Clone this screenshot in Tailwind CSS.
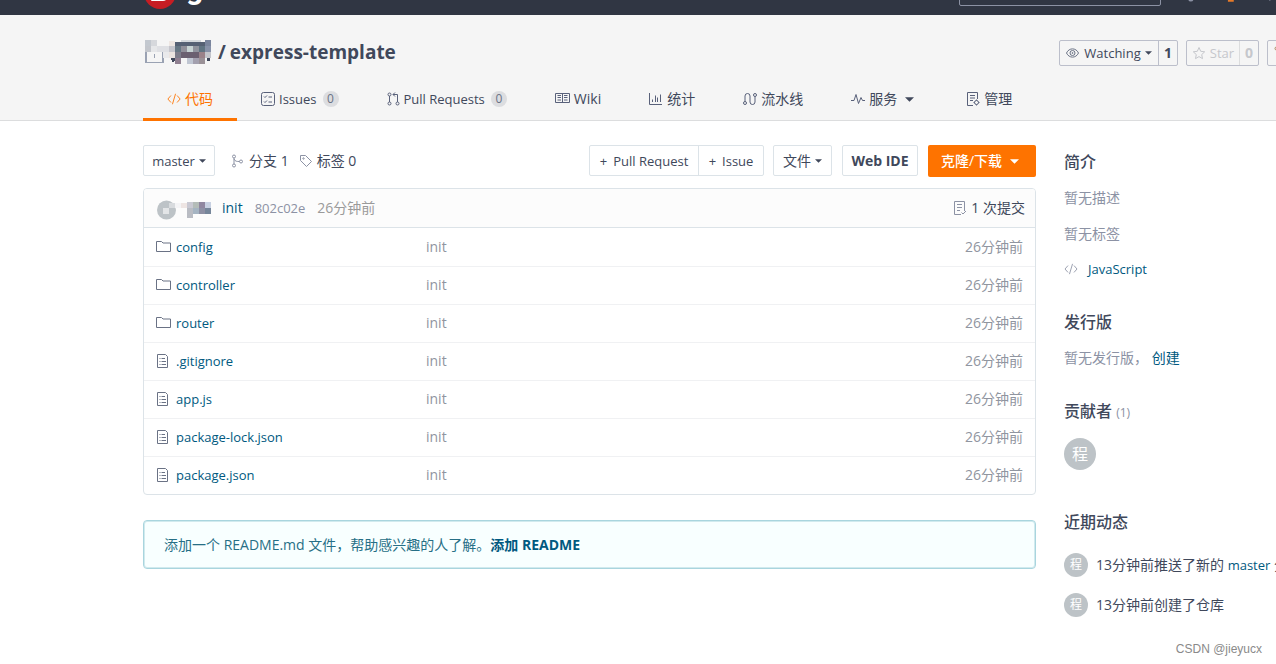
<!DOCTYPE html>
<html lang="zh-CN">
<head>
<meta charset="utf-8">
<title>express-template</title>
<script src="https://cdn.jsdelivr.net/npm/@tailwindcss/browser@4"></script>
</head>
<body class="min-h-screen overflow-x-hidden bg-white font-['Open_Sans','Noto_Sans_CJK_SC',sans-serif] text-sm leading-5 text-[#40485b]">
<svg class="hidden">
  <defs>
    <symbol id="folder" viewBox="0 0 16 14"><path d="M.5 11.500V1.500h5l1.500 1.500h7.500v8.500z" fill="none" stroke="#6a7285"/></symbol>
    <symbol id="file" viewBox="0 0 14 15"><path d="M1.500.500h8l2 2v11h-10zM3.500 4.500h1M3.500 7.500h1M3.500 10.500h1M5.500 4.500H9M5.500 7.500H10M5.500 10.500H10" fill="none" stroke="#6a7285"/></symbol>
    <symbol id="caret" viewBox="0 0 8 4"><path d="M0 0h8L4 4z" fill="currentColor"/></symbol>
    <symbol id="code" viewBox="0 0 16 14"><path d="M4.500 3 1 7l3.500 4M11.500 3 15 7l-3.500 4M9.800 1 6.200 13" fill="none" stroke="currentColor"/></symbol>
  </defs>
</svg>

<!-- Top bar, scrolled so that only its lower edge is in view -->
<header class="flex h-[15px] flex-col justify-end overflow-hidden bg-[#303643]">
  <div class="flex h-11 shrink-0 items-center pl-36">
    <a href="#" class="flex items-center gap-2.5 text-white">
      <svg class="size-8" viewBox="0 0 32 32"><circle cx="16" cy="16" r="16" fill="#c71d23"/><path d="M24 7H13a6 6 0 0 0-6 6v10a1 1 0 0 0 1 1h11a5 5 0 0 0 5-5v-5h-9v3h5v2a2 2 0 0 1-2 2h-7v-8a2 2 0 0 1 2-2h9z" fill="#fff"/></svg>
      <span class="pb-2 font-[Roboto] text-3xl font-bold leading-8">gitee</span>
    </a>
    <input type="search" aria-label="搜索" class="ml-auto h-[26px] w-[202px] rounded-xs border border-[#8c92a4] bg-transparent px-2 text-white">
    <div class="flex w-[115px] items-center gap-7 pl-6">
      <svg class="h-[18px] w-3 text-[#8c92a4]" viewBox="0 0 12 18"><path d="M1 13V7a5 5 0 0 1 10 0v6zM4 15a2 2 0 0 0 4 0" fill="none" stroke="currentColor" stroke-width="1.500"/></svg>
      <svg class="h-[18px] w-3 text-[#e67a28]" viewBox="0 0 12 18"><path d="M6 1v9M3 14.500h6M3 17h6M3 13a6 6 0 1 1 6 0" fill="none" stroke="currentColor" stroke-width="2"/></svg>
      <svg class="h-[18px] w-3 text-[#8c92a4]" viewBox="0 0 12 18"><path d="M6 1v16M1 9h10" stroke="currentColor"/></svg>
    </div>
  </div>
</header>

<section class="border-b border-[#dcddde] bg-[#f5f5f5] pl-[143px]">
  <div class="flex items-center overflow-hidden pt-6">
    <h1 class="flex items-center pb-0.5 text-[19px] font-bold leading-[26px]">
      <svg class="h-[26px] w-[75px] shrink-0" viewBox="143 39 75 26" shape-rendering="crispEdges">
        <path d="M146 50.500h17v12h-17zM154.500 54v4" fill="none" stroke="#9aa2b3" stroke-width="1.500"/>
        <path d="M171 56l2 5 2-3" fill="none" stroke="#40485b" stroke-width="2"/>
        <path d="M145 40h6v6h-6z" fill="#c3c8cf"/><path d="M151 40h6v6h-6z" fill="#d6d8dc"/><path d="M169 41h6v5h-6z" fill="#eee6e2"/><path d="M175 42h36v4h-36z" fill="#566174"/><path d="M181 40h20v2h-20z" fill="#d5d9dd"/><path d="M205 40h6v6h-6z" fill="#7a859d"/>
        <path d="M145 46h6v6h-6z" fill="#c3c6cc"/><path d="M151 46h6v6h-6z" fill="#e6e7e9"/><path d="M157 46h12v6h-12z" fill="#dfe0e4"/><path d="M169 46h6v6h-6z" fill="#c6c6cd"/><path d="M175 46h6v6h-6z" fill="#667683"/><path d="M181 46h6v6h-6z" fill="#91909a"/><path d="M187 46h6v6h-6z" fill="#c7d3d3"/><path d="M193 46h6v6h-6z" fill="#90939d"/><path d="M199 46h6v6h-6z" fill="#607482"/><path d="M205 46h6v6h-6z" fill="#8791a8"/>
        <path d="M163 52h6v6h-6z" fill="#e9e9eb"/><path d="M169 52h6v6h-6z" fill="#ebe4e0"/><path d="M175 52h6v6h-6z" fill="#7d7c8a"/><path d="M181 52h18v6h-18z" fill="#6b6070"/><path d="M199 52h6v6h-6z" fill="#9a8289"/><path d="M205 52h6v6h-6z" fill="#c3c5cb"/>
        <path d="M175 58h6v6h-6z" fill="#8f7f90"/><path d="M187 58h6v6h-6z" fill="#c0c6d2"/><path d="M193 58h6v6h-6z" fill="#a3a0ae"/><path d="M199 58h6v6h-6z" fill="#9a9197"/><path d="M207 58h3v3h-3z" fill="#40485b"/>
      </svg>
      <span class="mr-1">/</span>
      <a href="#">express-template</a>
    </h1>
    <div class="ml-auto flex w-[217px] shrink-0 gap-2">
      <div class="flex h-[26px] w-[119px] shrink-0 rounded-xs border border-[#bcbfcb]">
        <button class="flex flex-1 items-center justify-center gap-1">
          <svg class="mr-px h-3 w-[13px]" viewBox="0 0 13 12" fill="none" stroke="#6a7285"><path d="M.500 6C3 .500 10 .500 12.500 6 10 11.500 3 11.500.500 6z"/><circle cx="6.500" cy="6" r="2.500"/><circle cx="6.500" cy="6" r=".5"/></svg>
          <span class="text-[13px]">Watching</span>
          <svg class="h-1 w-[7px]"><use href="#caret"/></svg>
        </button>
        <a href="#" class="flex w-[19px] items-center justify-center border-l border-[#bcbfcb] font-bold">1</a>
      </div>
      <div class="flex h-[26px] w-[73px] shrink-0 rounded-xs border border-[#bcbfcb] text-[#c5c7cc]">
        <button disabled class="flex flex-1 items-center justify-center gap-1">
          <svg class="size-3.5" viewBox="0 0 14 14"><path d="M7 1.500 8.700 5.300l4 .5-3 2.800.8 4L7 10.600l-3.500 2 .8-4-3-2.800 4-.5z" fill="none" stroke="currentColor"/></svg>
          <span class="text-[13px]">Star</span>
        </button>
        <span class="flex w-[19px] items-center justify-center border-l border-[#dcddde] font-bold">0</span>
      </div>
      <button aria-label="Fork" class="flex h-[26px] w-[70px] shrink-0 items-center rounded-xs border border-[#bcbfcb] pl-1.5"><svg class="size-3.5" viewBox="0 0 14 14" fill="none" stroke="#b0845e"><circle cx="2.500" cy="2.500" r="1.500"/><circle cx="11" cy="2.500" r="1.500"/><path d="M2.500 4v3H11V4M7 7v6"/></svg></button>
    </div>
  </div>
  <nav class="-mb-px mt-[13px] flex whitespace-nowrap">
    <a href="#" class="flex h-[41px] items-center gap-1 border-b-3 border-[#fe7300] px-6 text-[#fe7300]"><svg class="h-3.5 w-3.5"><use href="#code"/></svg>代码</a>
    <a href="#" class="flex h-[41px] items-center gap-1 border-b-3 border-transparent px-6 text-[13px]"><svg class="size-3.5" viewBox="0 0 14 14" fill="none" stroke="#59617a"><rect x=".5" y=".5" width="13" height="13" rx="2"/><path d="m3 4.500 1 1 2-2M3 9.500l1 1 2-2M7.500 5H11M7.500 10H11"/></svg>Issues<span class="ml-0.5 flex size-4 items-center justify-center rounded-full bg-[#dcdde0] text-xs text-[#6a7285]">0</span></a>
    <a href="#" class="flex h-[41px] items-center gap-1 border-b-3 border-transparent px-6 text-[13px]"><svg class="h-3.5 w-[13px]" viewBox="0 0 13 14" fill="none" stroke="#59617a"><circle cx="2.500" cy="2.500" r="1.500"/><circle cx="2.500" cy="11.500" r="1.500"/><circle cx="10.500" cy="11.500" r="1.500"/><path d="M2.500 4v6M10.500 10V2.500H6M8 .500l-2 2 2 2"/></svg>Pull Requests<span class="ml-0.5 flex size-4 items-center justify-center rounded-full bg-[#dcdde0] text-xs text-[#6a7285]">0</span></a>
    <a href="#" class="flex h-[41px] items-center gap-1 border-b-3 border-transparent px-6"><svg class="h-3.5 w-[15px]" viewBox="0 0 15 14" fill="none" stroke="#59617a"><path d="M.500 1.500h14v9H.500zM7.500 1.500v9M2.500 3.500H6M2.500 5.500H6M2.500 8H6M9 3.500h3.500M9 5.500h3.500M9 8h3.500"/></svg>Wiki</a>
    <a href="#" class="flex h-[41px] items-center gap-1 border-b-3 border-transparent px-6"><svg class="size-3.5" viewBox="0 0 14 14" fill="none" stroke="#59617a"><path d="M.500 1v11.500H13M3.500 10V7.500M6.500 10V3.500M8.500 10V5.500M11.500 10V2.500"/></svg>统计</a>
    <a href="#" class="flex h-[41px] items-center gap-1 border-b-3 border-transparent px-6"><svg class="size-3.5" viewBox="0 0 14 14" fill="none" stroke="#59617a"><circle cx="2" cy="11" r="1.500"/><circle cx="12" cy="3" r="1.500"/><path d="M2 9.500V4a2.500 2.500 0 0 1 5 0v6a2.500 2.500 0 0 0 5 0V4.500"/></svg>流水线</a>
    <a href="#" class="flex h-[41px] items-center gap-1 border-b-3 border-transparent px-6"><svg class="size-3.5" viewBox="0 0 14 14" fill="none" stroke="#59617a"><path d="M0 8.500h3L5 2.500l2.500 9L10 5.500l1.500 3H14"/></svg>服务<svg class="ml-1 mr-1 h-[5px] w-[9px]"><use href="#caret"/></svg></a>
    <a href="#" class="flex h-[41px] items-center gap-1 border-b-3 border-transparent px-6"><svg class="size-3.5" viewBox="0 0 14 14" fill="none" stroke="#59617a"><path d="M7 13.500H1.500V.500h10V7M4 3.500h5M4 6h5M4 8.500h3"/><circle cx="10.500" cy="10.500" r="2"/><path d="M10.500 7.500v1M10.500 12.500v1M7.500 10.500h1M12.500 10.500h1"/></svg>管理</a>
  </nav>
</section>

<div class="flex gap-7 pl-[143px] pt-6">
  <main class="min-w-0 flex-1">
    <div class="flex items-start whitespace-nowrap">
      <button class="flex h-[31px] w-[72px] items-center justify-center gap-1 rounded-xs border border-[#dce3e8] text-[13px]">master<svg class="h-1 w-[7px]"><use href="#caret"/></svg></button>
      <a href="#" class="ml-4 flex h-[31px] items-center gap-1"><svg class="size-3.5" viewBox="0 0 14 14" fill="none" stroke="#8c92a4"><circle cx="3" cy="2.500" r="1.500"/><circle cx="3" cy="11.500" r="1.500"/><circle cx="10" cy="7.500" r="1.500"/><path d="M3 4v6M3 5c1 2.500 3 2.500 5.500 2.500"/></svg>分支 1</a>
      <a href="#" class="ml-2.5 flex h-[31px] items-center gap-1"><svg class="size-3.5" viewBox="0 0 14 14" fill="none" stroke="#8c92a4"><path d="M1.500 1.500h5l6 6-5 5-6-6z"/><circle cx="4.500" cy="4.500" r=".7"/></svg>标签 0</a>
      <div class="ml-auto flex h-[31px] rounded-xs border border-[#dce3e8] text-[13px]">
        <button class="flex w-[109px] items-center justify-center gap-1.5 border-r border-[#dce3e8]"><span>+</span>Pull Request</button>
        <button class="flex w-16 items-center justify-center gap-1.5"><span>+</span>Issue</button>
      </div>
      <button class="ml-[9px] flex h-[31px] w-[59px] items-center justify-center gap-1 rounded-xs border border-[#dce3e8]">文件<svg class="h-1 w-[7px]"><use href="#caret"/></svg></button>
      <button class="ml-2.5 h-[31px] w-[76px] rounded-xs border border-[#dce3e8] font-bold">Web IDE</button>
      <button class="ml-2.5 flex h-8 w-[108px] items-center justify-center gap-2 rounded-xs bg-[#fe7300] pr-1 font-medium text-white">克隆/下载<svg class="h-[5px] w-[9px]"><use href="#caret"/></svg></button>
    </div>

    <div class="mt-[11px] overflow-hidden rounded-sm border border-[#dce3e8]">
      <div class="flex h-[39px] items-center border-b border-[#dce3e8] bg-[#fcfcfc] pl-3 pr-2.5">
        <svg class="h-6 w-[58px]" viewBox="156 196 58 24" shape-rendering="crispEdges"><circle cx="166.500" cy="210" r="9.500" fill="#bdc3c7" shape-rendering="auto"/><path d="M163 208h6v6h-6z" fill="#e3e5e7"/><path d="M169 203h6v5h-6z" fill="#d8dbde"/><path d="M175 203h6v5h-6z" fill="#f4f4f6"/><path d="M181 203h6v5h-6z" fill="#eee5e3"/><path d="M187 202h6v6h-6z" fill="#c9c9d3"/><path d="M193 202h6v6h-6z" fill="#b4bcb8"/><path d="M199 202h6v6h-6z" fill="#9087a0"/><path d="M205 202h6v6h-6z" fill="#c8d1e2"/><path d="M187 208h6v10h-6z" fill="#b9bcc3"/><path d="M193 208h6v6h-6z" fill="#a5b4c2"/><path d="M199 208h6v6h-6z" fill="#8e90a4"/><path d="M205 208h6v6h-6z" fill="#76869a"/></svg>
        <a href="#" class="ml-2 text-[#005980]">init</a>
        <a href="#" class="ml-3 text-[13px] text-[#8c92a4]">802c02e</a>
        <span class="ml-3 text-[#9a9a9a]">26分钟前</span>
        <a href="#" class="ml-auto flex items-center gap-1"><svg class="size-3.5" viewBox="0 0 14 14" fill="none" stroke="#8c92a4"><path d="M8 13.500H1.500V.500h10V10M4 3.500h5M4 6.500h5M4 9.500h3M8.500 11.500l1.500 1.500 3-3"/></svg>1 次提交</a>
      </div>
      <table class="w-full table-fixed border-collapse">
        <colgroup><col class="w-[282px]"><col><col class="w-32"></colgroup>
        <tbody class="text-[#9095a0]">
          <tr class="h-[38px] border-b border-[#f0f1f3]"><td class="pl-3 text-[13px]"><a href="#" class="flex items-center gap-1 text-[#005980]"><svg class="h-3.5 w-4"><use href="#folder"/></svg>config</a></td><td>init</td><td class="pr-3 text-right">26分钟前</td></tr>
          <tr class="h-[38px] border-b border-[#f0f1f3]"><td class="pl-3 text-[13px]"><a href="#" class="flex items-center gap-1 text-[#005980]"><svg class="h-3.5 w-4"><use href="#folder"/></svg>controller</a></td><td>init</td><td class="pr-3 text-right">26分钟前</td></tr>
          <tr class="h-[38px] border-b border-[#f0f1f3]"><td class="pl-3 text-[13px]"><a href="#" class="flex items-center gap-1 text-[#005980]"><svg class="h-3.5 w-4"><use href="#folder"/></svg>router</a></td><td>init</td><td class="pr-3 text-right">26分钟前</td></tr>
          <tr class="h-[38px] border-b border-[#f0f1f3]"><td class="pl-3 text-[13px]"><a href="#" class="flex items-center gap-1.5 text-[#005980]"><svg class="h-[15px] w-3.5"><use href="#file"/></svg>.gitignore</a></td><td>init</td><td class="pr-3 text-right">26分钟前</td></tr>
          <tr class="h-[38px] border-b border-[#f0f1f3]"><td class="pl-3 text-[13px]"><a href="#" class="flex items-center gap-1.5 text-[#005980]"><svg class="h-[15px] w-3.5"><use href="#file"/></svg>app.js</a></td><td>init</td><td class="pr-3 text-right">26分钟前</td></tr>
          <tr class="h-[38px] border-b border-[#f0f1f3]"><td class="pl-3 text-[13px]"><a href="#" class="flex items-center gap-1.5 text-[#005980]"><svg class="h-[15px] w-3.5"><use href="#file"/></svg>package-lock.json</a></td><td>init</td><td class="pr-3 text-right">26分钟前</td></tr>
          <tr class="h-[38px]"><td class="pl-3 text-[13px]"><a href="#" class="flex items-center gap-1.5 text-[#005980]"><svg class="h-[15px] w-3.5"><use href="#file"/></svg>package.json</a></td><td>init</td><td class="pr-3 text-right">26分钟前</td></tr>
        </tbody>
      </table>
    </div>

    <div class="mt-[25px] flex h-[49px] items-center rounded-sm border border-[#a9d5de] bg-[#f8ffff] pl-5 text-[#276f86] ring-1 ring-inset ring-[#a9d5de]/50">
      <p>添加一个 README.md 文件，帮助感兴趣的人了解。</p>
      <a href="#" class="font-bold text-[#005980]">添加 README</a>
    </div>
  </main>

  <aside class="w-[212px] shrink-0 overflow-hidden whitespace-nowrap pt-[5px]">
    <h2 class="text-base font-medium leading-6">简介</h2>
    <p class="mt-3.5 text-[#8c92a4]">暂无描述</p>
    <p class="mt-4 text-[#8c92a4]">暂无标签</p>
    <p class="mt-[15px] flex items-center gap-2.5"><svg class="h-3 w-3.5 text-[#8c92a4]"><use href="#code"/></svg><a href="#" class="text-[13px] text-[#005980]">JavaScript</a></p>
    <h2 class="mt-[31px] text-base font-medium leading-6">发行版</h2>
    <p class="mt-3.5 text-[#8c92a4]">暂无发行版， <a href="#" class="text-[#005980]">创建</a></p>
    <h2 class="mt-[31px] text-base font-medium leading-6">贡献者 <span class="text-xs text-[#8c92a4]">(1)</span></h2>
    <a href="#" class="mt-[15px] flex size-8 items-center justify-center rounded-full bg-[#bdc3c7] text-base text-white">程</a>
    <h2 class="mt-10 text-base font-medium leading-6">近期动态</h2>
    <div class="mt-[19px] flex items-center gap-2"><span class="flex size-6 shrink-0 items-center justify-center rounded-full bg-[#bdc3c7] text-xs text-white">程</span><p>13分钟前推送了新的 <a href="#" class="text-[13px] text-[#005980]">master</a> 分支</p></div>
    <div class="mt-4 flex items-center gap-2"><span class="flex size-6 shrink-0 items-center justify-center rounded-full bg-[#bdc3c7] text-xs text-white">程</span><p>13分钟前创建了仓库</p></div>
    <p class="mt-6 pr-3.5 text-right font-['Liberation_Sans'] text-xs leading-4 text-[#8a8a8a]">CSDN @jieyucx</p>
  </aside>
</div>
</body>
</html>
